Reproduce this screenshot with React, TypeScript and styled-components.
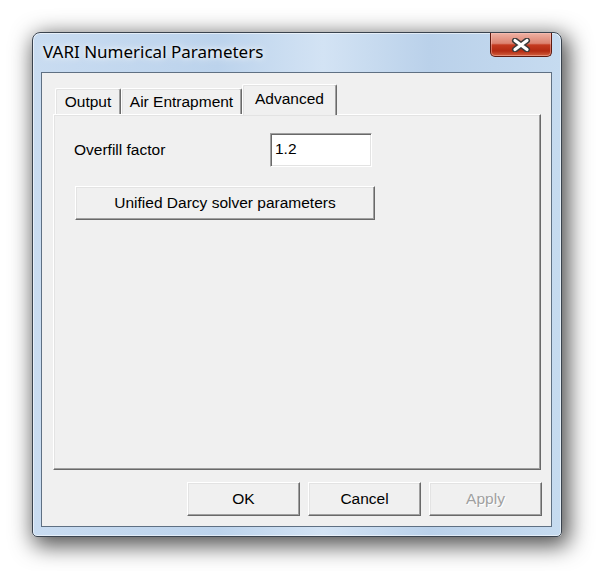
import React from "react";
import styled, { createGlobalStyle } from "styled-components";

const Global = createGlobalStyle`
  html, body { margin: 0; padding: 0; background: #ffffff; }
  * { box-sizing: border-box; }
`;

const Page = styled.div`
  padding: 32px 0 0 32px;
  width: 598px;
  height: 571px;
  overflow: hidden;
`;

const Window = styled.div`
  width: 530px;
  height: 505px;
  border: 1px solid #3a434e;
  border-radius: 8px 8px 5px 5px;
  background: linear-gradient(90deg, #c9dcf1 0%, #bcd3ec 35%, #d3e3f4 55%, #bad1ea 75%, #c6dbf0 100%);
  box-shadow: 4px 6px 22px 3px rgba(0, 0, 0, 0.68), inset 0 0 0 1px rgba(255, 255, 255, 0.55);
  padding: 0 9px 9px 8px;
  display: flex;
  flex-direction: column;
`;

const TitleBar = styled.div`
  height: 39px;
  display: flex;
  align-items: flex-start;
`;

const Title = styled.div`
  margin: 9px 0 0 2px;
  font-family: "Noto Sans", "Open Sans", sans-serif;
  font-size: 17px;
  line-height: 20px;
  color: #000;
  text-shadow: 0 0 10px rgba(255, 255, 255, 0.95), 0 0 4px rgba(255, 255, 255, 0.8);
`;

const CloseButton = styled.div`
  margin-left: auto;
  width: 62px;
  height: 24px;
  border: 1px solid #5e1a10;
  border-top: none;
  border-radius: 0 0 5px 5px;
  background: linear-gradient(180deg, #eeb2a4 0%, #dc8270 45%, #c43a20 52%, #b32a12 78%, #d2613f 100%);
  box-shadow: inset 0 0 0 1px rgba(255, 200, 190, 0.45);
  display: flex;
  align-items: center;
  justify-content: center;
`;

const Client = styled.div`
  flex: 1;
  border: 1px solid #5f7083;
  background: #f0f0f0;
  display: flex;
  flex-direction: column;
  font-family: "Liberation Sans", Arial, sans-serif;
  font-size: 15.5px;
  color: #000;
`;

const TabArea = styled.div`
  margin: 11px 10px 0 11px;
  flex: 1;
  display: flex;
  flex-direction: column;
`;

const TabList = styled.div`
  display: flex;
  align-items: flex-end;
  height: 30px;
  padding-left: 2px;
`;

const Tab = styled.div<{ $w: number; $active?: boolean }>`
  width: ${(p) => p.$w}px;
  height: ${(p) => (p.$active ? 31 : 26)}px;
  margin-bottom: ${(p) => (p.$active ? -1 : 0)}px;
  z-index: ${(p) => (p.$active ? 2 : 1)};
  background: #f0f0f0;
  border-top: 1px solid #ffffff;
  border-left: 1px solid #ffffff;
  border-right: 1px solid #696969;
  border-radius: 2px 2px 0 0;
  box-shadow: inset -1px 0 0 #a0a0a0, inset 1px 1px 0 #e3e3e3;
  display: flex;
  align-items: center;
  justify-content: center;
  padding-bottom: ${(p) => (p.$active ? 3 : 0)}px;
  white-space: nowrap;
`;

const Panel = styled.div`
  flex: 1;
  background: #f0f0f0;
  border-top: 1px solid #ffffff;
  border-left: 1px solid #ffffff;
  border-right: 1px solid #696969;
  border-bottom: 1px solid #696969;
  box-shadow: inset -1px -1px 0 #a0a0a0, inset 1px 1px 0 #e3e3e3;
  padding: 18px 0 0 20px;
  display: flex;
  flex-direction: column;
  gap: 19px;
`;

const FieldRow = styled.div`
  display: grid;
  grid-template-columns: 196px 102px;
  align-items: center;
`;

const Label = styled.span`
  white-space: nowrap;
`;

const TextInput = styled.div`
  height: 34px;
  background: #ffffff;
  border-top: 1px solid #a0a0a0;
  border-left: 1px solid #a0a0a0;
  border-right: 1px solid #ffffff;
  border-bottom: 1px solid #ffffff;
  box-shadow: inset 1px 1px 0 #696969, inset -1px -1px 0 #e3e3e3;
  padding: 5px 0 0 4px;
  line-height: 20px;
`;

const Button = styled.div<{ $w: number; $disabled?: boolean }>`
  width: ${(p) => p.$w}px;
  height: 34px;
  background: #f0f0f0;
  border-top: 1px solid #ffffff;
  border-left: 1px solid #ffffff;
  border-right: 1px solid #696969;
  border-bottom: 1px solid #696969;
  box-shadow: inset -1px -1px 0 #a0a0a0, inset 1px 1px 0 #e3e3e3;
  display: flex;
  align-items: center;
  justify-content: center;
  color: ${(p) => (p.$disabled ? "#a0a0a0" : "#000")};
  text-shadow: ${(p) => (p.$disabled ? "1px 1px 0 #ffffff" : "none")};
  white-space: nowrap;
`;

const SolverButton = styled(Button)`
  margin-left: 1px;
`;

const ButtonRow = styled.div`
  display: flex;
  justify-content: flex-end;
  gap: 8px;
  padding: 12px 9px 10px 0;
`;

const CloseGlyph = () => (
  <svg width="22" height="14" viewBox="0 0 22 14">
    <path d="M5 2.5 L17 11.5 M17 2.5 L5 11.5" stroke="#3b3b3b" strokeWidth="6" strokeLinecap="round" fill="none" />
    <path d="M5 2.5 L17 11.5 M17 2.5 L5 11.5" stroke="#ffffff" strokeWidth="3.2" strokeLinecap="round" fill="none" />
  </svg>
);

export default function App() {
  return (
    <Page>
      <Global />
      <Window>
        <TitleBar>
          <Title>VARI Numerical Parameters</Title>
          <CloseButton>
            <CloseGlyph />
          </CloseButton>
        </TitleBar>
        <Client>
          <TabArea>
            <TabList>
              <Tab $w={66}>Output</Tab>
              <Tab $w={121}>Air Entrapment</Tab>
              <Tab $w={95} $active>
                Advanced
              </Tab>
            </TabList>
            <Panel>
              <FieldRow>
                <Label>Overfill factor</Label>
                <TextInput>1.2</TextInput>
              </FieldRow>
              <SolverButton $w={300}>Unified Darcy solver parameters</SolverButton>
            </Panel>
          </TabArea>
          <ButtonRow>
            <Button $w={113}>OK</Button>
            <Button $w={113}>Cancel</Button>
            <Button $w={113} $disabled>
              Apply
            </Button>
          </ButtonRow>
        </Client>
      </Window>
    </Page>
  );
}
